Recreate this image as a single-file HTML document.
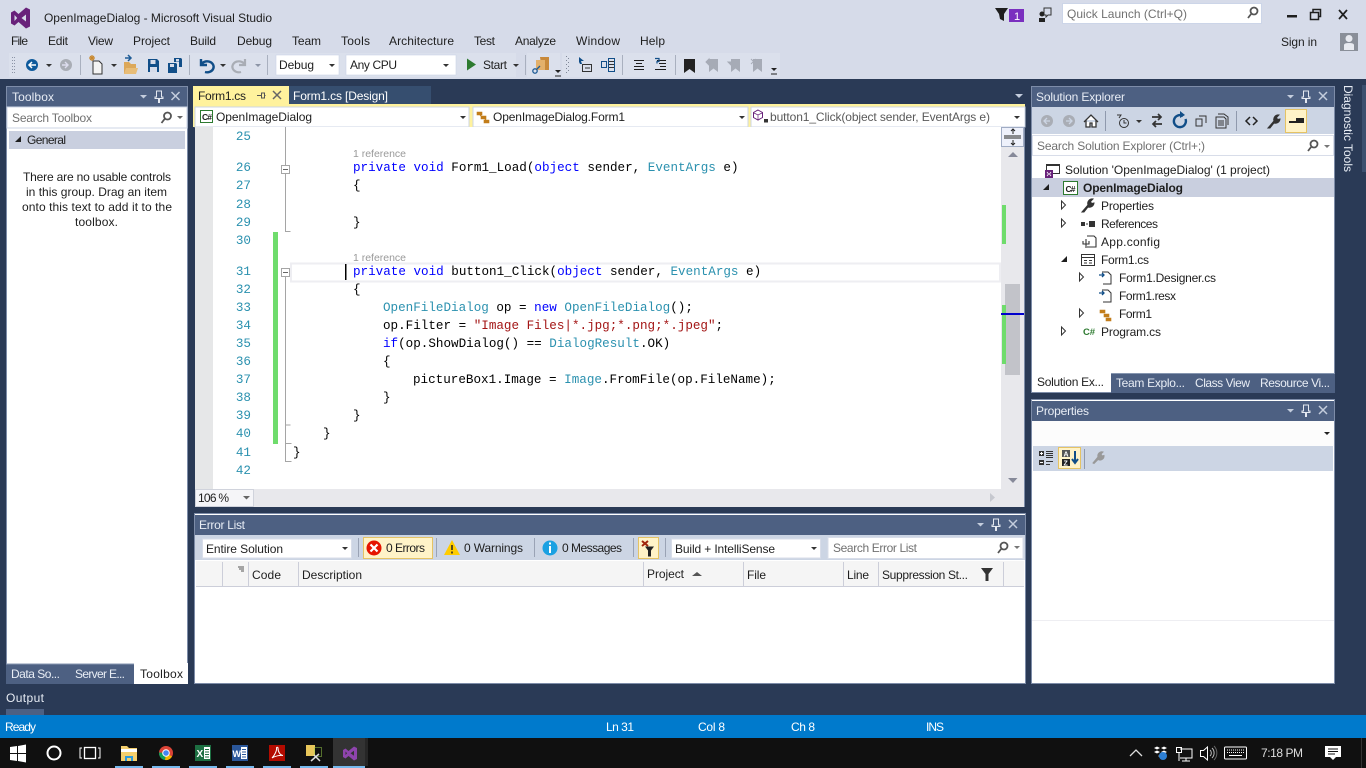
<!DOCTYPE html>
<html><head><meta charset="utf-8"><title>OpenImageDialog - Microsoft Visual Studio</title>
<style>
html,body{margin:0;padding:0;width:1366px;height:768px;overflow:hidden;background:#2a3a56}
svg{position:absolute;left:0;top:0;display:block}
text{font-family:"Liberation Sans",sans-serif;font-size:12px;fill:#1e1e1e;white-space:pre}
.w{fill:#fff}.g{fill:#717171}.l{fill:#e8edf5}
.c{font-family:"Liberation Mono",monospace;font-size:12.6px;fill:#000}
.k{fill:#0000ff}.y{fill:#2b91af}.s{fill:#a31515}
.n{font-family:"Liberation Mono",monospace;font-size:12.6px;fill:#2b91af;text-anchor:end}
.r{font-size:10.5px;fill:#999}
</style></head><body>
<svg width="1366" height="768" viewBox="0 0 1366 768" xmlns="http://www.w3.org/2000/svg">
<!-- chrome -->
<rect width="1366" height="79" fill="#d6dbe9"/>
<rect x="0" y="79" width="1366" height="636" fill="#2a3a56"/>
<rect x="9" y="53" width="507" height="24" fill="#dbe0ec"/>
<rect x="527" y="53" width="33" height="24" fill="#dbe0ec"/>
<rect x="562" y="53" width="218" height="24" fill="#dbe0ec"/>
<!-- VS logo -->
<path d="M11 12.5l3.5-2 4 3.500 7.500-6.500 4 2v17l-4 2-7.500-6.500-4 3.500-3.500-2zM14.500 15v6l2.700-3zM21.500 18l4.500 3.500v-7z" fill="#68217a" fill-rule="evenodd"/>
<text x="44" y="22" textLength="228">OpenImageDialog - Microsoft Visual Studio</text>
<!-- menu -->
<text x="11" y="45" textLength="17">File</text>
<text x="48" y="45" textLength="20">Edit</text>
<text x="88" y="45" textLength="25">View</text>
<text x="133" y="45" textLength="37">Project</text>
<text x="190" y="45" textLength="26">Build</text>
<text x="237" y="45" textLength="35">Debug</text>
<text x="292" y="45" textLength="29">Team</text>
<text x="341" y="45" textLength="29">Tools</text>
<text x="389" y="45" textLength="65">Architecture</text>
<text x="474" y="45" textLength="21">Test</text>
<text x="515" y="45" textLength="41">Analyze</text>
<text x="576" y="45" textLength="44">Window</text>
<text x="640" y="45" textLength="25">Help</text>
<text x="1281" y="46" textLength="36">Sign in</text>
<rect x="1340" y="33" width="18" height="18" fill="#8a8f99"/>
<path d="M1349 35a3.500 3.500 0 0 1 0 7a3.500 3.500 0 0 1 0-7zM1344 50v-5q0-2 5-2t5 2v5z" fill="#e8eaf0"/>
<!-- top-right -->
<path d="M995 8h13l-4 6v7l-4-2-1-5z" fill="#1e1e1e"/>
<rect x="1009" y="9" width="15" height="13" fill="#7a2fbf"/>
<text x="1014" y="20" style="font-size:11px;fill:#fff">1</text>
<path d="M1044 8h7v7h-3l-2 2v-2h-2z" fill="none" stroke="#333"/><circle cx="1042" cy="14" r="2.500" fill="#222"/><path d="M1039 22v-4h6v4z" fill="#222"/>
<rect x="1062.500" y="3.500" width="199" height="20" fill="#fff" stroke="#ccd5e8"/>
<text x="1067" y="18" class="g" textLength="120">Quick Launch (Ctrl+Q)</text>
<g fill="none" stroke="#555" stroke-width="1.800"><circle cx="1254" cy="11" r="3.500"/><path d="M1251.500 13.500l-3.500 4.500"/></g>
<rect x="1287" y="15" width="10" height="2.500" fill="#1e1e1e"/>
<g fill="none" stroke="#1e1e1e"><rect x="1310.500" y="12.500" width="8" height="7" stroke-width="1.500"/><path d="M1313 12v-2.500h7.500v7h-2" stroke-width="1.500"/></g>
<path d="M1339 10l8 9M1347 10l-8 9" stroke="#1e1e1e" stroke-width="1.700"/>
<!-- toolbar -->
<path d="M12 57h1v1h-1zM14 57h1v1h-1zM12 60h1v1h-1zM14 60h1v1h-1zM12 63h1v1h-1zM14 63h1v1h-1zM12 66h1v1h-1zM14 66h1v1h-1zM12 69h1v1h-1zM14 69h1v1h-1zM12 72h1v1h-1zM14 72h1v1h-1z" fill="#8c94a6"/>
<circle cx="32" cy="65" r="6" fill="#0e5a9c"/><path d="M36 65h-6M32 62l-3 3 3 3" stroke="#fff" stroke-width="1.500" fill="none"/>
<path d="M46 64h6l-3 3z" fill="#333"/>
<circle cx="66" cy="65" r="6" fill="#a9adb5"/><path d="M62 65h6M65 62l3 3-3 3" stroke="#dde" stroke-width="1.400" fill="none"/>
<rect x="80" y="55" width="1" height="20" fill="#a9b0bf"/>
<path d="M93 61h6l3 3v10h-9z" fill="#f4f4f4" stroke="#333"/>
<path d="M89 58h6M92 55v6M90 56l4 4M94 56l-4 4" stroke="#c8872c" stroke-width="1.200"/>
<path d="M111 64h6l-3 3z" fill="#333"/>
<path d="M124 62h5l2 2h5v10h-12z" fill="#dca85a"/><path d="M124 74l2-6h12l-2 6z" fill="#e8bd78"/><path d="M126 58h6M129 55l3 3-3 3" stroke="#1f5c96" stroke-width="1.500" fill="none" transform="translate(-1 0)"/>
<path d="M148 59h9l2 2v11h-11z" fill="#114e88"/><rect x="150.500" y="60" width="5" height="4" fill="#d6dbe9"/><rect x="150" y="67" width="7" height="5" fill="#d6dbe9"/>
<path d="M168 63h8l1 1v9h-9z" fill="#114e88"/><path d="M174 58h7l1 1v8h-3v-5h-5z" fill="#114e88"/><rect x="176" y="59" width="3" height="2.500" fill="#d6dbe9"/><rect x="170" y="64" width="4" height="3" fill="#d6dbe9"/>
<rect x="189" y="55" width="1" height="20" fill="#a9b0bf"/>
<path d="M201 59v6h6M201 65a6.500 5.500 0 1 1 4 7" fill="none" stroke="#114e88" stroke-width="2.400"/>
<path d="M220 64h6l-3 3z" fill="#333"/>
<path d="M245 59v6h-6M245 65a6.500 5.500 0 1 0-4 7" fill="none" stroke="#a9adb5" stroke-width="2.200"/>
<path d="M255 64h6l-3 3z" fill="#8c94a6"/>
<rect x="267" y="55" width="1" height="20" fill="#a9b0bf"/>
<rect x="276" y="55" width="63" height="20" fill="#fff" stroke="#ccd5e8" stroke-width=".6"/>
<text x="279" y="69" textLength="35">Debug</text><path d="M329 64h6l-3 3z" fill="#333"/>
<rect x="346" y="55" width="110" height="20" fill="#fff" stroke="#ccd5e8" stroke-width=".6"/>
<text x="350" y="69" textLength="47">Any CPU</text><path d="M443 64h6l-3 3z" fill="#333"/>
<path d="M467 58.500l9 6-9 6z" fill="#2d7a30"/>
<text x="483" y="69" textLength="24">Start</text><path d="M513 64h6l-3 3z" fill="#333"/>
<rect x="525" y="55" width="1" height="20" fill="#a9b0bf"/>
<path d="M540 57h9v13h-7z" fill="#c8893a"/><path d="M536 60h9v10h-9z" fill="#e3b06a"/>
<circle cx="535" cy="71" r="2.200" fill="none" stroke="#1f5c96" stroke-width="1.300"/><path d="M537 69l3-3" stroke="#1f5c96" stroke-width="1.300"/>
<path d="M555 70h6l-3 3z" fill="#222"/><rect x="555" y="75.500" width="6" height="1" fill="#222"/>
<path d="M566 56h1v1h-1zM568 58h1v1h-1zM566 60h1v1h-1zM568 62h1v1h-1zM566 64h1v1h-1zM568 66h1v1h-1zM566 68h1v1h-1zM568 70h1v1h-1zM566 72h1v1h-1z" fill="#7f8797"/>
<path d="M579 57l5 4-3 0 1 3h-2l-1-2z" fill="#114e88"/><rect x="582.500" y="64.500" width="9" height="7" fill="none" stroke="#333"/><path d="M585 68h5" stroke="#333"/>
<path d="M601.500 61.500h5v6h-5z" fill="none" stroke="#114e88"/><path d="M608.500 58.500h6v13h-6z" fill="none" stroke="#114e88"/><path d="M609 61.500h5M609 64.500h5M609 67.500h5" stroke="#333"/>
<rect x="622" y="55" width="1" height="20" fill="#a9b0bf"/>
<path d="M634 60.500h10M636 63.500h6M634 66.500h10M634 69.500h10" stroke="#1e1e1e"/>
<path d="M657 60.500h9M659 63.500h7M660 66.500h6M655 69.500h11" stroke="#1e1e1e"/><path d="M655 58.500h4v3h-2v2" fill="none" stroke="#114e88" stroke-width="1.200"/>
<rect x="675" y="55" width="1" height="20" fill="#a9b0bf"/>
<path d="M684 59h11v14l-5.500-4-5.500 4z" fill="#222"/>
<g fill="#a6abb6"><path d="M709 59h9v13l-4.500-3.500-4.500 3.500z"/><path d="M731 59h9v13l-4.500-3.500-4.500 3.500z"/><path d="M753 59h9v13l-4.500-3.500-4.500 3.500z"/></g>
<path d="M706 62l3-3v6zM728 62h3v3zM751 59l5 5M756 59l-5 5" stroke="#a6abb6" fill="#a6abb6"/>
<rect x="771" y="73.500" width="6" height="1" fill="#222"/><path d="M771 68h6l-3 3z" fill="#222"/>

<!-- Toolbox -->
<rect x="6.500" y="86.500" width="181" height="597" fill="#fff" stroke="#7d8ca8"/>
<rect x="7" y="87" width="180" height="20" fill="#4d6082"/>
<text x="12" y="101" class="l" textLength="42">Toolbox</text>
<path d="M140 95h7l-3.500 3.500z" fill="#c4cddd"/>
<path d="M156.500 91h5v6h1.500v1.500h-3.500v4h-1v-4h-3.500v-1.500h1.500z" fill="none" stroke="#e4e8f0" stroke-width="1"/>
<path d="M171.500 92l8 8M179.500 92l-8 8" stroke="#c4cddd" stroke-width="1.500"/>
<rect x="7" y="107" width="180" height="21" fill="#fff" stroke="#ccd5e4"/>
<text x="12" y="122" class="g" textLength="80">Search Toolbox</text>
<g fill="none" stroke="#555" stroke-width="1.800"><circle cx="167.500" cy="116" r="3.500"/><path d="M165 118.500l-3.500 4.500"/></g><path d="M177 116h6l-3 3z" fill="#666"/>
<rect x="9" y="131" width="176" height="18" fill="#c9cfdf"/>
<path d="M21 136v6h-6z" fill="#1e1e1e"/>
<text x="27" y="144" textLength="39">General</text>
<text x="23" y="181" textLength="148">There are no usable controls</text>
<text x="26" y="196" textLength="141">in this group. Drag an item</text>
<text x="22" y="211" textLength="150">onto this text to add it to the</text>
<text x="75" y="226" textLength="43">toolbox.</text>
<rect x="6" y="664" width="128" height="20" fill="#4d6082"/>
<text x="11" y="678" class="l" textLength="49">Data So...</text>
<text x="75" y="678" class="l" textLength="50">Server E...</text>
<rect x="134" y="663" width="54" height="21" fill="#fff"/>
<text x="140" y="678" textLength="43">Toolbox</text>
<rect x="6" y="663.500" width="128" height="1" fill="#8696b0"/>
<text x="6" y="702" class="l" textLength="38">Output</text>
<rect x="6" y="709" width="38" height="6" fill="#4d6082"/>

<!-- Tabs -->
<path d="M1015 94h8l-4 4z" fill="#c4cddd"/>
<rect x="193" y="86" width="96" height="20" fill="#fff29d"/>
<rect x="289" y="86" width="142" height="18" fill="#364e6f"/>
<rect x="193" y="104" width="832" height="3" fill="#fff29d"/>
<text x="198" y="100" textLength="48">Form1.cs</text>
<path d="M257 95.500h4M261.500 92.500v6M261.500 93h3v5h-3M264.500 95.500h1" fill="none" stroke="#555"/>
<path d="M273 91l8 8M281 91l-8 8" stroke="#666" stroke-width="1.500"/>
<text x="293" y="100" class="w" textLength="95">Form1.cs [Design]</text>
<!-- nav -->
<rect x="193" y="106" width="832" height="21" fill="#fff29d"/>
<rect x="195" y="107" width="274" height="20" fill="#fff" stroke="#ccd5e4"/>
<rect x="473" y="107" width="275" height="20" fill="#fff" stroke="#ccd5e4"/>
<rect x="751" y="107" width="274" height="20" fill="#fff" stroke="#ccd5e4"/>
<rect x="200.500" y="110.500" width="12" height="12" fill="#fff" stroke="#2d7a30"/>
<text x="202" y="120" style="font-size:8.500px;font-weight:bold" textLength="10">C#</text>
<text x="216" y="121" textLength="96">OpenImageDialog</text>
<path d="M460 116h6l-3 3z" fill="#333"/><path d="M739 116h6l-3 3z" fill="#333"/><path d="M1014 116h6l-3 3z" fill="#333"/>
<path d="M477 112h5v3h-5zM481 116h5v3h-5zM484 120h5v3h-5z" fill="#c27d1a" stroke="#c27d1a" stroke-width=".6"/><path d="M480 115l2 2M485 119l1 1" stroke="#c27d1a"/>
<text x="493" y="121" textLength="132">OpenImageDialog.Form1</text>
<path d="M758 110l4.500 2.500v5l-4.500 2.500-4.500-2.500v-5z" fill="#fff" stroke="#68217a"/><path d="M754 113l4 2 4-2M758 115v5" stroke="#68217a" fill="none" stroke-width=".7"/>
<rect x="764" y="119" width="4" height="3.500" fill="#333"/>
<text x="770" y="121" style="fill:#595959" textLength="220">button1_Click(object sender, EventArgs e)</text>

<!-- Editor -->
<rect x="195" y="127" width="830" height="380" fill="#fff"/>
<rect x="195" y="127" width="18" height="362" fill="#e6e7e8"/>
<rect x="291" y="263.500" width="709" height="18" fill="none" stroke="#eeeef2" stroke-width="2"/>
<rect x="1001" y="127" width="24" height="380" fill="#e8e8ec"/>
<rect x="195" y="489" width="806" height="18" fill="#e8e8ec"/>
<rect x="1024" y="127" width="1" height="380" fill="#7d8ca8"/>
<rect x="1001.500" y="127.500" width="22" height="19" fill="#eef1fb" stroke="#a0acc4"/>
<path d="M1004 136h17M1004 138h17" stroke="#222"/>
<path d="M1013 129v5M1013 140v5M1011 131l2-2 2 2M1011 143l2 2 2-2" stroke="#222" fill="none"/>
<path d="M1008 157l5-5 5 5z" fill="#868999"/><path d="M1008 478h9.500l-4.500 5z" fill="#868999"/>
<rect x="1005" y="284" width="15" height="91" fill="#c2c3c9"/>
<rect x="1002" y="205" width="4" height="39" fill="#6fdc6c"/>
<rect x="1002" y="305" width="4" height="59" fill="#6fdc6c"/>
<rect x="1001" y="313" width="23" height="2" fill="#0000cc"/>
<rect x="273" y="232" width="5" height="212" fill="#6fdc6c"/>
<g stroke="#a5a5a5" fill="none"><path d="M285.500 127v104.500h5"/><path d="M285.500 277v184.500h6M285.500 443.500h6M285.500 425h5"/></g>
<rect x="281.500" y="165.500" width="8" height="8" fill="#fff" stroke="#a5a5a5"/><path d="M283 169.500h5" stroke="#666"/>
<rect x="281.500" y="268.500" width="8" height="8" fill="#fff" stroke="#a5a5a5"/><path d="M283 272.500h5" stroke="#666"/>
<rect x="345" y="264" width="1.500" height="16" fill="#000"/>
<g transform="translate(0 -1)">
<text class="n" x="251" y="141">25</text><text class="n" x="251" y="172">26</text><text class="n" x="251" y="190">27</text><text class="n" x="251" y="209">28</text><text class="n" x="251" y="227">29</text><text class="n" x="251" y="245">30</text><text class="n" x="251" y="276">31</text><text class="n" x="251" y="294">32</text><text class="n" x="251" y="312">33</text><text class="n" x="251" y="330">34</text><text class="n" x="251" y="348">35</text><text class="n" x="251" y="366">36</text><text class="n" x="251" y="384">37</text><text class="n" x="251" y="402">38</text><text class="n" x="251" y="420">39</text><text class="n" x="251" y="438">40</text><text class="n" x="251" y="457">41</text><text class="n" x="251" y="475">42</text>
<text class="c" x="353" y="172"><tspan class="k">private</tspan> <tspan class="k">void</tspan> Form1_Load(<tspan class="k">object</tspan> sender, <tspan class="y">EventArgs</tspan> e)</text>
<text class="c" x="353" y="190">{</text>
<text class="c" x="353" y="227">}</text>
<text class="c" x="353" y="276"><tspan class="k">private</tspan> <tspan class="k">void</tspan> button1_Click(<tspan class="k">object</tspan> sender, <tspan class="y">EventArgs</tspan> e)</text>
<text class="c" x="353" y="294">{</text>
<text class="c" x="383" y="312"><tspan class="y">OpenFileDialog</tspan> op = <tspan class="k">new</tspan> <tspan class="y">OpenFileDialog</tspan>();</text>
<text class="c" x="383" y="330">op.Filter = <tspan class="s">"Image Files|*.jpg;*.png;*.jpeg"</tspan>;</text>
<text class="c" x="383" y="348"><tspan class="k">if</tspan>(op.ShowDialog() == <tspan class="y">DialogResult</tspan>.OK)</text>
<text class="c" x="383" y="366">{</text>
<text class="c" x="413" y="384">pictureBox1.Image = <tspan class="y">Image</tspan>.FromFile(op.FileName);</text>
<text class="c" x="383" y="402">}</text>
<text class="c" x="353" y="420">}</text>
<text class="c" x="323" y="438">}</text>
<text class="c" x="293" y="457">}</text>
</g>
<text class="r" x="353" y="157" textLength="53">1 reference</text>
<text class="r" x="353" y="261" textLength="53">1 reference</text>
<rect x="195.500" y="489.500" width="58" height="17" fill="#f5f5f8" stroke="#d0d3dc"/>
<text x="198" y="502" textLength="31">106 %</text><path d="M243 496h7l-3.500 3.500z" fill="#666"/>
<path d="M990 493v9l5-4.500z" fill="#c6c8cf"/>

<!-- Error list -->
<rect x="194.500" y="513.500" width="831" height="170" fill="#fff" stroke="#7d8ca8"/>
<rect x="195" y="515" width="830" height="20" fill="#4d6082"/>
<text x="199" y="529" class="l" textLength="46">Error List</text>
<path d="M977 523h7l-3.500 3.500z" fill="#c4cddd"/>
<path d="M993.500 519h5v6h1.500v1.500h-3.500v4h-1v-4h-3.500v-1.500h1.500z" fill="none" stroke="#e4e8f0"/>
<path d="M1009 520l8 8M1017 520l-8 8" stroke="#c4cddd" stroke-width="1.500"/>
<rect x="195" y="535" width="830" height="25" fill="#ccd5e4"/>
<rect x="202.500" y="539" width="149" height="19" fill="#fff" stroke="#d8dde9"/>
<text x="206" y="553" textLength="77">Entire Solution</text><path d="M342 547h6l-3 3z" fill="#333"/>
<rect x="358" y="538" width="1" height="19" fill="#9aa3b5"/>
<rect x="363.500" y="537.500" width="69" height="21" fill="#fff3c8" stroke="#e5c365"/>
<circle cx="374" cy="548" r="7.500" fill="#e51400"/><path d="M370.500 544.500l7 7M377.500 544.500l-7 7" stroke="#fff" stroke-width="2.200"/>
<text x="386" y="552" textLength="39">0 Errors</text>
<rect x="436" y="538" width="1" height="19" fill="#9aa3b5"/>
<path d="M452 540l8 15h-16z" fill="#ffcc00"/><path d="M452 545v5M452 551.500v2" stroke="#222" stroke-width="1.500"/>
<text x="464" y="552" textLength="59">0 Warnings</text>
<rect x="534" y="538" width="1" height="19" fill="#9aa3b5"/>
<circle cx="550" cy="548" r="7.500" fill="#1ba1e2"/><path d="M550 546v7M550 542.500v2" stroke="#fff" stroke-width="2"/>
<text x="562" y="552" textLength="60">0 Messages</text>
<rect x="633" y="538" width="1" height="19" fill="#9aa3b5"/>
<rect x="638.500" y="537.500" width="20" height="21" fill="#fff3c8" stroke="#e5c365"/>
<path d="M642 541l6 5M648 541l-6 5" stroke="#a1260d" stroke-width="2"/>
<path d="M645 546.500h9l-3 4v6h-3v-6z" fill="#222"/>
<rect x="665" y="538" width="1" height="19" fill="#9aa3b5"/>
<rect x="671.500" y="539" width="149" height="19" fill="#fff" stroke="#d8dde9"/>
<text x="675" y="553" textLength="100">Build + IntelliSense</text><path d="M811 547h6l-3 3z" fill="#333"/>
<rect x="828" y="537.500" width="195" height="21" fill="#fff" stroke="#d8dde9"/>
<text x="833" y="552" class="g" textLength="84">Search Error List</text>
<g fill="none" stroke="#555" stroke-width="1.800"><circle cx="1004" cy="546" r="3.500"/><path d="M1001.500 548.500l-3.500 4.500"/></g><path d="M1014 546h6l-3 3z" fill="#777"/>
<rect x="196" y="561" width="828" height="25" fill="#f5f5f5"/>
<rect x="196" y="586" width="828" height="1" fill="#ccced9"/>
<g fill="#ccced9"><rect x="222" y="562" width="1" height="24"/><rect x="248" y="562" width="1" height="24"/><rect x="298" y="562" width="1" height="24"/><rect x="643" y="562" width="1" height="24"/><rect x="743" y="562" width="1" height="24"/><rect x="843" y="562" width="1" height="24"/><rect x="878" y="562" width="1" height="24"/><rect x="1003" y="562" width="1" height="24"/></g>
<path d="M238 567h6M239 569h5M241 571h3" stroke="#555"/>
<text x="252" y="579" textLength="29">Code</text>
<text x="302" y="579" textLength="60">Description</text>
<text x="647" y="578" textLength="37">Project</text>
<path d="M692 576l5-4 5 4z" fill="#555"/>
<text x="747" y="579" textLength="19">File</text>
<text x="847" y="579" textLength="22">Line</text>
<text x="882" y="579" textLength="86">Suppression St...</text>
<path d="M981 568h12l-4.500 6v7h-3v-7z" fill="#333"/>

<!-- Solution Explorer -->
<rect x="1031.500" y="86.500" width="303" height="306" fill="#fff" stroke="#7d8ca8"/>
<rect x="1032" y="87" width="302" height="20" fill="#4d6082"/>
<text x="1036" y="101" class="l" textLength="89">Solution Explorer</text>
<path d="M1287 95h7l-3.500 3.500z" fill="#c4cddd"/>
<path d="M1303.500 91h5v6h1.500v1.500h-3.500v4h-1v-4h-3.500v-1.500h1.500z" fill="none" stroke="#e4e8f0"/>
<path d="M1319 92l8 8M1327 92l-8 8" stroke="#c4cddd" stroke-width="1.500"/>
<rect x="1032" y="107" width="302" height="27" fill="#ccd5e4"/>
<circle cx="1047" cy="121" r="6" fill="#a9adb5"/><path d="M1050 121h-6M1047 118l-3 3 3 3" stroke="#ccd5e4" stroke-width="1.300" fill="none"/>
<circle cx="1069" cy="121" r="6" fill="#a9adb5"/><path d="M1066 121h6M1069 118l3 3-3 3" stroke="#ccd5e4" stroke-width="1.300" fill="none"/>
<path d="M1084 122l7-7 7 7M1086 120v7h4v-4h2v4h4v-7" fill="#fff" stroke="#333" stroke-width="1.300"/>
<rect x="1105" y="111" width="1" height="20" fill="#8f99ad"/>
<circle cx="1124" cy="123" r="4.500" fill="none" stroke="#333"/><path d="M1124 120v3h2.500M1117 115h4l-2 3" stroke="#333" fill="none"/>
<path d="M1136 120h6l-3 3z" fill="#333"/>
<path d="M1152 117h9M1158 114l3 3-3 3M1162 124h-9M1156 121l-3 3 3 3" stroke="#333" fill="none" stroke-width="1.700"/>
<path d="M1183 116a6 6 0 1 0 2.500 3" fill="none" stroke="#114e88" stroke-width="2.400"/><path d="M1180 111l5 4-5 3z" fill="#114e88"/>
<path d="M1196 119h6v7h-6zM1199 116h7v7" fill="none" stroke="#333"/>
<path d="M1216 117h8l2 2v9h-10zM1218 114h6l4 3v8" fill="#ccd5e4" stroke="#333"/><path d="M1218 121h6M1218 123h6M1218 125h6" stroke="#333"/>
<rect x="1236" y="111" width="1" height="20" fill="#8f99ad"/>
<path d="M1250 117l-4 4 4 4M1253 117l4 4-4 4" fill="none" stroke="#222" stroke-width="1.500"/>
<path d="M1268 128l6-7a4.500 4.500 0 0 1 5-6l-2.500 2.500 1 2 2.500-.500a4.500 4.500 0 0 1-6 4l-4 5z" fill="#333" stroke="#333"/>
<rect x="1285.500" y="109.500" width="21" height="23" fill="#fff3c8" stroke="#e5c365"/>
<path d="M1289 123v-2h7v-3h8v5z" fill="#222"/>
<rect x="1032.500" y="135.500" width="301" height="20" fill="#fff" stroke="#d8dde9"/>
<text x="1037" y="150" class="g" textLength="168">Search Solution Explorer (Ctrl+;)</text>
<g fill="none" stroke="#555" stroke-width="1.800"><circle cx="1314" cy="144" r="3.500"/><path d="M1311.500 146.500l-3.500 4.500"/></g><path d="M1324 145h6l-3 3z" fill="#777"/>
<!-- tree -->
<rect x="1032" y="178" width="302" height="19" fill="#c9cfdf"/>
<rect x="1046.500" y="164.500" width="13" height="9" fill="#fff" stroke="#333"/><rect x="1046" y="164" width="14" height="2" fill="#333"/>
<rect x="1045" y="170" width="8" height="8" fill="#68217a"/><path d="M1047 172l1.500 2-1.500 2M1051 172l-1.500 2 1.500 2" fill="none" stroke="#fff" stroke-width=".8"/>
<text x="1065" y="174" textLength="205">Solution 'OpenImageDialog' (1 project)</text>
<path d="M1049 184v6h-6z" fill="#1e1e1e"/>
<rect x="1063.500" y="181.500" width="14" height="13" fill="#fff" stroke="#2d7a30"/>
<text x="1065.500" y="192" style="font-size:8.500px;font-weight:bold" textLength="10">C#</text>
<text x="1083" y="192" style="font-weight:bold" textLength="100">OpenImageDialog</text>
<g fill="#fff" stroke="#333"><path d="M1061.500 201v8l4-4z"/><path d="M1061.500 219v8l4-4z"/><path d="M1061.500 327v8l4-4z"/><path d="M1079.500 273v8l4-4z"/><path d="M1079.500 309v8l4-4z"/></g>
<path d="M1082 212l6-7a4.500 4.500 0 0 1 5-6l-2.500 2.500 1 2 2.500-.500a4.500 4.500 0 0 1-6 4l-4 5z" fill="#333" stroke="#333"/>
<text x="1101" y="210" textLength="53">Properties</text>
<rect x="1081" y="222" width="4" height="4" fill="#333"/><rect x="1086" y="223.500" width="2" height="1" fill="#333"/><rect x="1089" y="221" width="6" height="6" fill="#333"/>
<text x="1101" y="228" textLength="57">References</text>
<path d="M1087 236h7l2 2v9h-9M1086 239v9M1083 241v3h6v-3" fill="none" stroke="#333" stroke-width="1.100"/>
<text x="1101" y="246" textLength="59">App.config</text>
<path d="M1067 256v6h-6z" fill="#1e1e1e"/>
<rect x="1081.500" y="254.500" width="13" height="11" fill="#fff" stroke="#333"/><path d="M1082 257.500h12M1084 260.500h3M1089 260.500h3M1084 263h3M1089 263h3" stroke="#333"/>
<text x="1101" y="264" textLength="48">Form1.cs</text>
<path d="M1102 272h6l3 3v9h-8" fill="#fff" stroke="#333"/><path d="M1099 275h5M1102 273l2 2-2 2" stroke="#114e88" fill="none" stroke-width="1.300"/>
<text x="1119" y="282" textLength="97">Form1.Designer.cs</text>
<path d="M1102 290h6l3 3v9h-8" fill="#fff" stroke="#333"/><path d="M1099 293h5M1102 291l2 2-2 2" stroke="#114e88" fill="none" stroke-width="1.300"/>
<text x="1119" y="300" textLength="57">Form1.resx</text>
<path d="M1100 310h5v3h-5zM1104 314h5v3h-5zM1106 318h5v3h-5z" fill="#c27d1a" stroke="#c27d1a" stroke-width=".6"/>
<text x="1119" y="318" textLength="33">Form1</text>
<text x="1083" y="335" style="font-size:9.500px;font-weight:bold;fill:#2d7a30" textLength="12">C#</text>
<text x="1101" y="336" textLength="60">Program.cs</text>
<rect x="1111" y="374" width="224" height="19" fill="#4d6082"/>
<rect x="1111" y="373" width="224" height="1" fill="#8696b0"/>
<text x="1037" y="386" textLength="67">Solution Ex...</text>
<text x="1116" y="387" class="l" textLength="69">Team Explo...</text>
<text x="1195" y="387" class="l" textLength="55">Class View</text>
<text x="1260" y="387" class="l" textLength="70">Resource Vi...</text>
<!-- Properties -->
<rect x="1031.500" y="399.500" width="303" height="284" fill="#fff" stroke="#7d8ca8"/>
<rect x="1032" y="401" width="302" height="20" fill="#4d6082"/>
<text x="1036" y="415" class="l" textLength="53">Properties</text>
<path d="M1287 409h7l-3.500 3.500z" fill="#c4cddd"/>
<path d="M1303.500 405h5v6h1.500v1.500h-3.500v4h-1v-4h-3.500v-1.500h1.500z" fill="none" stroke="#e4e8f0"/>
<path d="M1319 406l8 8M1327 406l-8 8" stroke="#c4cddd" stroke-width="1.500"/>
<rect x="1032" y="421" width="302" height="25" fill="#fcfcfc"/>
<path d="M1324 432h6l-3 3z" fill="#222"/>
<rect x="1033" y="446" width="300" height="25" fill="#ccd5e4"/>
<rect x="1039" y="451" width="5" height="5" fill="#333"/><rect x="1039" y="460" width="5" height="5" fill="#333"/>
<path d="M1040 453.500h3M1041.500 452v3M1040 462.500h3" stroke="#fff"/>
<path d="M1046 451.500h7M1046 453.500h7M1046 455.500h7M1046 457.500h7M1046 461.500h7M1046 464.500h4" stroke="#333"/>
<rect x="1058.500" y="447.500" width="22" height="21" fill="#fff3c8" stroke="#e5c365"/>
<rect x="1062" y="450" width="8" height="7" fill="#555"/><rect x="1062" y="459" width="8" height="7" fill="#222"/>
<text x="1063.500" y="456.500" style="font-size:7px;font-weight:bold;fill:#fff">A</text>
<text x="1063.500" y="465.500" style="font-size:7px;font-weight:bold;fill:#fff">Z</text>
<path d="M1075 451v11M1072 459l3 4 3-4" stroke="#114e88" fill="none" stroke-width="2"/>
<rect x="1084" y="449" width="1" height="20" fill="#8f99ad"/>
<path d="M1093 463l5-6a4 4 0 0 1 5-5l-2 2 1 2 2-.500a4 4 0 0 1-6 4l-4 4z" fill="#999" stroke="#999"/>
<rect x="1032" y="620" width="302" height="1" fill="#eeeef2"/>
<!-- Diagnostic tools -->
<rect x="1362" y="85" width="4" height="87" fill="#3c506f"/>
<text transform="translate(1344 85) rotate(90)" x="0" y="0" class="l" textLength="87">Diagnostic Tools</text>

<!-- status -->
<rect x="0" y="715" width="1366" height="23" fill="#007acc"/>
<text x="5" y="731" class="w" textLength="31">Ready</text>
<text x="606" y="731" class="w" textLength="28">Ln 31</text>
<text x="698" y="731" class="w" textLength="27">Col 8</text>
<text x="791" y="731" class="w" textLength="24">Ch 8</text>
<text x="926" y="731" class="w" textLength="18">INS</text>

<!-- taskbar -->
<rect x="0" y="738" width="1366" height="30" fill="#101010"/>
<path d="M10 747l7-1v7h-7zM18 746l8-1.500v8.500h-8zM10 754h7v7l-7-1zM18 754h8v8.500l-8-1.500z" fill="#fff"/>
<circle cx="54" cy="753" r="6.500" fill="none" stroke="#fff" stroke-width="2"/>
<rect x="84.500" y="747.500" width="11" height="11" fill="none" stroke="#fff" stroke-width="1.300"/><path d="M82 748h-2v10h2M98 748h2v10h-2" fill="none" stroke="#fff"/>
<path d="M121 746h6l2 2h8v13h-16z" fill="#f4cf6d"/><rect x="121" y="749" width="16" height="3" fill="#fff"/><path d="M125 761v-5h8v5h-2v-3h-4v3z" fill="#2b9adb"/>
<circle cx="166" cy="753" r="7" fill="#db4437"/><path d="M166 753l6 3.500a7 7 0 0 1-7 3.500z" fill="#f4b400"/><path d="M166 753l-1 7a7 7 0 0 1-6-7.500z" fill="#0f9d58"/><circle cx="166" cy="753" r="3.300" fill="#4285f4" stroke="#fff"/>
<rect x="195" y="745" width="16" height="16" fill="#1d6f42"/><rect x="204" y="747" width="6" height="12" fill="#fff"/><path d="M205 749.500h4M205 752h4M205 754.500h4M205 757h4" stroke="#1d6f42"/><text x="196.500" y="757" style="font-size:10px;font-weight:bold;fill:#fff">X</text>
<rect x="232" y="745" width="16" height="16" fill="#2b579a"/><rect x="241" y="747" width="6" height="12" fill="#fff"/><path d="M242 749.500h4M242 752h4M242 754.500h4M242 757h4" stroke="#2b579a"/><text x="232.500" y="757" style="font-size:9px;font-weight:bold;fill:#fff">W</text>
<rect x="269" y="745" width="16" height="16" fill="#b30b00"/><path d="M272 758c3-3 5-8 4.500-10 0-1 1.500-1 1.500 0 0 4 2 7 5 7.500-3-.500-8 .500-11 2.500z" fill="none" stroke="#fff"/>
<rect x="306" y="745" width="9" height="11" fill="#e8c65a"/><rect x="314.500" y="747.500" width="7" height="9" fill="none" stroke="#9ad04a" stroke-dasharray="1 1"/><path d="M311 761l8-7M320 761l-6-6" stroke="#ddd" stroke-width="1.500"/>
<rect x="333" y="738" width="32" height="28" fill="#333"/>
<rect x="365" y="738" width="3" height="28" fill="#262626"/>
<path d="M343 750l2.500-1.500 3 2.500 5.500-4.500 3 1.500v11l-3 1.500-5.500-4.500-3 2.500-2.500-1.500zM345.500 751.500v3.500l1.600-1.750zM350.500 753.250l3.500 2.500v-5z" fill="#8e44ad" fill-rule="evenodd"/>
<g fill="#76b9ed"><rect x="115" y="766" width="28" height="2"/><rect x="152" y="766" width="28" height="2"/><rect x="189" y="766" width="28" height="2"/><rect x="226" y="766" width="28" height="2"/><rect x="263" y="766" width="28" height="2"/><rect x="300" y="766" width="28" height="2"/><rect x="333" y="766" width="32" height="2"/></g>
<path d="M1130 756l6-6 6 6" fill="none" stroke="#ddd" stroke-width="1.300"/>
<path d="M1154 748l3-1.500 3 1.500-3 1.500zM1161 748l3-1.500 3 1.500-3 1.500zM1154 752l3-1.500 3 1.500-3 1.500zM1161 752l3-1.500 3 1.500-3 1.500zM1158 756l3-1.500 3 1.500-3 1.500z" fill="#fff"/>
<circle cx="1163" cy="756" r="4" fill="#2d7fd3"/>
<path d="M1180 749h12v9h-12M1186 758v3M1182 761h8" fill="none" stroke="#fff"/><rect x="1176.500" y="747.500" width="5" height="5" fill="none" stroke="#fff"/><path d="M1179 752v9" stroke="#fff"/>
<path d="M1200.500 750.500h3l4-3.500v13l-4-3.500h-3z" fill="none" stroke="#fff"/><path d="M1210 750a4 4 0 0 1 0 6M1212 748a7 7 0 0 1 0 10" fill="none" stroke="#bbb"/><path d="M1214 746a10 10 0 0 1 0 14" fill="none" stroke="#666"/>
<rect x="1224.500" y="747" width="22" height="12" rx="1" fill="none" stroke="#fff"/><path d="M1227 750h17M1227 752.500h17" stroke="#fff" stroke-dasharray="1 1"/><path d="M1229 755.500h13" stroke="#fff"/>
<text x="1261" y="757" style="fill:#ddd" textLength="42">7:18 PM</text>
<path d="M1325 746h16v11h-5l-3 3-3-3h-5z" fill="#fff"/><path d="M1328 749h10M1328 751.500h10M1328 754h7" stroke="#111"/>
<rect x="1361" y="738" width="1" height="30" fill="#333"/>
</svg>
</body></html>
